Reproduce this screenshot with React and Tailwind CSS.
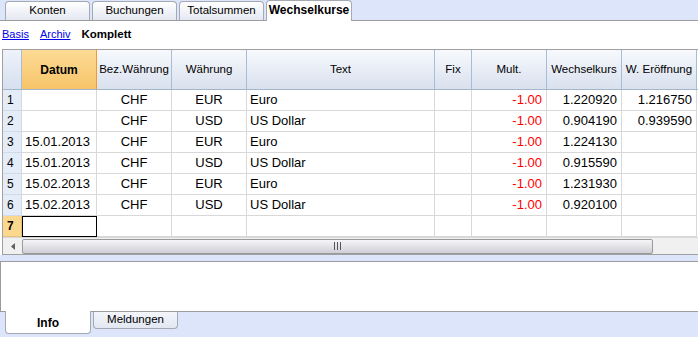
import React from "react";

const cols = [
  { key: "n", w: "w-[19px]" },
  { key: "datum", w: "w-[75px]", label: "Datum", align: "text-left pl-[3px]" },
  { key: "bez", w: "w-[75px]", label: "Bez.Währung", align: "text-center" },
  { key: "wae", w: "w-[75px]", label: "Währung", align: "text-center" },
  { key: "text", w: "w-[188px]", label: "Text", align: "text-left pl-[3px]" },
  { key: "fix", w: "w-[37px]", label: "Fix", align: "text-center" },
  { key: "mult", w: "w-[75px]", label: "Mult.", align: "text-right pr-[4px] text-[#ff0000]" },
  { key: "kurs", w: "w-[75px]", label: "Wechselkurs", align: "text-right pr-[4px]" },
  { key: "eroe", w: "w-[75px]", label: "W. Eröffnung", align: "text-right pr-[4px]" },
];

const rows = [
  { datum: "", bez: "CHF", wae: "EUR", text: "Euro", fix: "", mult: "-1.00", kurs: "1.220920", eroe: "1.216750" },
  { datum: "", bez: "CHF", wae: "USD", text: "US Dollar", fix: "", mult: "-1.00", kurs: "0.904190", eroe: "0.939590" },
  { datum: "15.01.2013", bez: "CHF", wae: "EUR", text: "Euro", fix: "", mult: "-1.00", kurs: "1.224130", eroe: "" },
  { datum: "15.01.2013", bez: "CHF", wae: "USD", text: "US Dollar", fix: "", mult: "-1.00", kurs: "0.915590", eroe: "" },
  { datum: "15.02.2013", bez: "CHF", wae: "EUR", text: "Euro", fix: "", mult: "-1.00", kurs: "1.231930", eroe: "" },
  { datum: "15.02.2013", bez: "CHF", wae: "USD", text: "US Dollar", fix: "", mult: "-1.00", kurs: "0.920100", eroe: "" },
  { datum: "", bez: "", wae: "", text: "", fix: "", mult: "", kurs: "", eroe: "" },
];

function Tab({ label }) {
  return (
    <div className="w-[85px] h-[19px] border border-b-0 border-[#a4a9b4] rounded-t-[4px] bg-gradient-to-b from-white to-[#e4e8f2] flex items-center justify-center text-[11.5px] text-black">
      {label}
    </div>
  );
}

export default function App() {
  return (
    <div
      className="w-[698px] h-[337px] bg-white overflow-hidden flex flex-col text-black"
      style={{ fontFamily: '"Liberation Sans", Arial, sans-serif' }}
    >
      {/* Top tabs */}
      <div className="h-[21px] shrink-0 bg-[#dde5fa] border-b border-[#9c9c9c] flex items-end pl-[5px] gap-[2px]">
        <Tab label="Konten" />
        <Tab label="Buchungen" />
        <Tab label="Totalsummen" />
        <div className="w-[86px] h-[21px] -mb-px border border-b-0 border-[#a4a9b4] rounded-t-[4px] bg-white flex items-center justify-center text-[12px] font-bold pb-[2px]">
          Wechselkurse
        </div>
      </div>

      {/* Links */}
      <div className="h-[28px] shrink-0 flex items-center pl-[2px] pb-[1px] gap-[11px] text-[11px]">
        <span className="text-[#0000ee] underline">Basis</span>
        <span className="text-[#0000ee] underline">Archiv</span>
        <span className="font-bold text-[11.5px]">Komplett</span>
      </div>

      {/* Grid */}
      <div className="ml-[2px] w-[697px] shrink-0 border border-[#a0a0a0] flex flex-col">
        {/* Header */}
        <div className="flex h-[40px] border-b border-[#a3b5c9]">
          {cols.map((c) =>
            c.key === "n" ? (
              <div key={c.key} className={`${c.w} h-full bg-gradient-to-b from-[#eef2fa] to-[#d6e0f0] border-r border-[#a8bdd3]`} />
            ) : c.key === "datum" ? (
              <div key={c.key} className={`${c.w} h-full bg-gradient-to-b from-[#fcdb95] to-[#f6c468] border-r border-[#f29a2a] flex items-center justify-center text-[12px] font-bold`}>
                {c.label}
              </div>
            ) : (
              <div key={c.key} className={`${c.w} h-full bg-gradient-to-b from-[#f7f9fd] to-[#d9e1ee] border-r border-[#a8bdd3] flex items-center justify-center text-[11.5px] whitespace-nowrap`}>
                {c.label}
              </div>
            )
          )}
        </div>

        {/* Rows */}
        {rows.map((r, i) => {
          const last = i === rows.length - 1;
          return (
            <div key={i} className="flex h-[21px]">
              {cols.map((c) => {
                if (c.key === "n") {
                  return (
                    <div
                      key={c.key}
                      className={`${c.w} h-full border-r border-b ${last ? "bg-[#fcd88e] border-[#e8c27a] font-bold" : "bg-[#e4ecf7] border-[#d0dae8]"} flex items-center pl-[4px] text-[12px]`}
                    >
                      {i + 1}
                    </div>
                  );
                }
                if (last && c.key === "datum") {
                  return <div key={c.key} className={`${c.w} h-full border border-black`} />;
                }
                return (
                  <div
                    key={c.key}
                    className={`${c.w} h-full border-r border-b border-[#d8d8d8] flex items-center text-[13px] whitespace-nowrap overflow-hidden ${c.align} ${c.align.includes("text-right") ? "justify-end" : c.align.includes("text-center") ? "justify-center" : "justify-start"}`}
                  >
                    {r[c.key]}
                  </div>
                );
              })}
            </div>
          );
        })}

        {/* Horizontal scrollbar */}
        <div className="h-[17px] flex items-center bg-[#f0f0f0] border-t border-[#d8d8d8]">
          <div className="w-[19px] h-full flex items-center justify-center">
            <svg width="4" height="7" viewBox="0 0 4 7">
              <path d="M4 0 L0 3.5 L4 7 Z" fill="#606060" />
            </svg>
          </div>
          <div className="w-[631px] h-[15px] rounded-[2px] border border-[#9a9a9a] bg-gradient-to-b from-[#f6f6f8] to-[#cfcfd6] flex items-center justify-center">
            <svg width="9" height="8" viewBox="0 0 9 8">
              <rect x="1" y="0" width="1" height="8" fill="#555" />
              <rect x="4" y="0" width="1" height="8" fill="#555" />
              <rect x="7" y="0" width="1" height="8" fill="#555" />
            </svg>
          </div>
        </div>
      </div>

      {/* Blue stripe */}
      <div className="h-[6px] shrink-0 bg-[#dde5fa]" />

      {/* Info panel */}
      <div className="h-[50px] shrink-0 bg-white border-t border-l border-[#9c9c9c]" />

      {/* Bottom tabs */}
      <div className="flex-1 bg-[#dde5fa] border-t border-[#9c9c9c] flex items-start pl-[5px] gap-[2px]">
        <div className="w-[86px] h-[23px] -mt-px border border-t-0 border-[#a4a9b4] rounded-b-[4px] bg-white flex items-center justify-center text-[12px] font-bold pt-[2px]">
          Info
        </div>
        <div className="w-[85px] h-[17px] border border-t-0 border-[#a4a9b4] rounded-b-[4px] bg-gradient-to-b from-[#f4f6fb] to-[#e2e7f2] flex items-center justify-center text-[11.5px]">
          Meldungen
        </div>
      </div>
    </div>
  );
}
